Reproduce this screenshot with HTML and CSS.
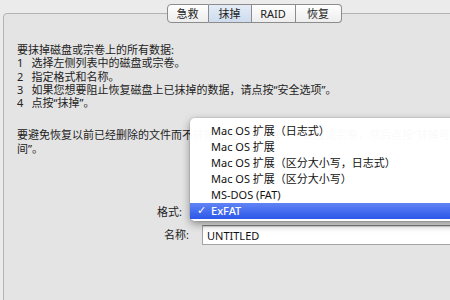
FILE: index.html
```html
<!DOCTYPE html>
<html lang="zh-CN">
<head>
    <meta charset="UTF-8">
    <title>抹掉</title>
    <link rel="stylesheet" href="styles.css">
</head>
<body>

<div class="window">
    <div class="tabs">
        <span class="tab tab-first">急救</span>
        <span class="tab tab-active">抹掉</span>
        <span class="tab tab-raid">RAID</span>
        <span class="tab tab-last">恢复</span>
    </div>

    <div class="panel">
        <p>要抹掉磁盘或宗卷上的所有数据:</p>
        <ol class="steps">
            <li><span class="num">1</span>选择左侧列表中的磁盘或宗卷。</li>
            <li><span class="num">2</span>指定格式和名称。</li>
            <li><span class="num">3</span>如果您想要阻止恢复磁盘上已抹掉的数据，请点按“安全选项”。</li>
            <li><span class="num">4</span>点按“抹掉”。</li>
        </ol>

        <p class="note">要避免恢复以前已经删除的文件而不抹掉磁盘，请选择一个磁盘或宗卷，然后点按“抹掉可用空<br>间”。</p>

        <div class="form">
            <label class="label label-format">格式:</label>
            <div class="popup">
                <ul class="menu">
                    <li>Mac OS 扩展（日志式）</li>
                    <li>Mac OS 扩展</li>
                    <li>Mac OS 扩展（区分大小写，日志式）</li>
                    <li>Mac OS 扩展（区分大小写）</li>
                    <li>MS-DOS (FAT)</li>
                    <li class="selected"><span class="check">✓</span>ExFAT</li>
                </ul>
            </div>

            <label class="label" for="name">名称:</label>
            <input class="field" id="name" type="text" value="UNTITLED">
        </div>
    </div>
</div>

</body>
</html>
```

FILE: styles.css
```css
body {
    margin: 0;
    background-color: #ebebeb;
    font-family: "Noto Sans", "Noto Sans CJK SC", sans-serif;
    font-size: 11px;
    color: #222;
    overflow: hidden;
    height: 300px;
}

.window {
    width: 502px;
    margin: 0 3px;
    padding-top: 4px;
}

.tabs {
    display: flex;
    justify-content: center;
    position: relative;
    z-index: 1;
}

.tab {
    box-sizing: border-box;
    height: 19px;
    line-height: 17px;
    text-align: center;
    border: 1px solid #8c8c8c;
    border-left: none;
    background: linear-gradient(#fefefe, #ededed);
    width: 43px;
}

.tab-first {
    width: 42px;
    border-left: 1px solid #8c8c8c;
    border-radius: 4px 0 0 4px;
}

.tab-raid {
    width: 44px;
}

.tab-last {
    width: 46px;
    border-radius: 0 4px 4px 0;
}

.tab-active {
    background: linear-gradient(#e4ecf6, #cddcee);
}

.panel {
    margin-top: -10px;
    height: 300px;
    padding: 29px 13px 0;
    background-color: #e4e4e4;
    border: 1px solid #b3b3b3;
    border-radius: 4px;
    line-height: 13.3px;
}

p {
    margin: 0;
}

.steps {
    list-style: none;
    margin: 0;
    padding: 0;
}

.num {
    display: inline-block;
    width: 14.5px;
}

.note {
    margin-top: 19px;
}

.form {
    display: grid;
    grid-template-columns: 172px 300px;
    column-gap: 13px;
    row-gap: 3px;
    margin-top: 47px;
}

.label {
    text-align: right;
    line-height: 20px;
}

.label-format {
    padding-right: 7px;
}

.popup {
    position: relative;
    height: 20px;
}

.menu {
    position: absolute;
    left: -12px;
    top: -84px;
    width: 300px;
    margin: 0;
    padding: 5px 0 2px;
    list-style: none;
    background-color: rgba(255, 255, 255, 0.975);
    border-radius: 5px 0 0 5px;
    box-shadow: 0 3px 9px rgba(0, 0, 0, 0.4), 0 0 0 1px rgba(0, 0, 0, 0.06);
    z-index: 2;
}

.menu li {
    position: relative;
    height: 16px;
    line-height: 16px;
    padding-left: 21px;
    color: #111;
}

.menu .selected {
    background: linear-gradient(#6184f4, #2c57ea);
    color: #fff;
    font-weight: 500;
}

.check {
    position: absolute;
    left: 7px;
    font-family: "DejaVu Sans", sans-serif;
    font-size: 11px;
    font-weight: bold;
}

.field {
    box-sizing: border-box;
    height: 20px;
    padding: 0 4px;
    font: inherit;
    color: #111;
    background-color: #fff;
    border: 1px solid #a4a4a4;
    border-top-color: #7e7e7e;
    box-shadow: inset 0 1px 1px rgba(0, 0, 0, 0.15);
    outline: none;
}
```
